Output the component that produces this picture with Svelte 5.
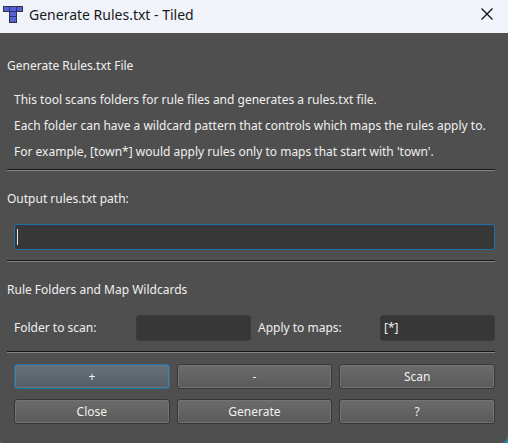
<script>
  let outputPath = $state('');
  let folder = $state('');
  let wildcard = $state('[*]');

  const actions = ['+', '-', 'Scan', 'Close', 'Generate', '?'];
</script>

<div class="desktop">
  <div class="dialog" role="dialog" aria-labelledby="title">
    <header>
      <svg class="logo" viewBox="0 0 20 17" aria-hidden="true">
        <path d="M0 0H20V6H14V17H6V6H0Z" fill="#30343c" />
        <g fill="#5760d4">
          <rect x="1" y="1" width="5" height="4" />
          <rect x="7" y="1" width="6" height="4" />
          <rect x="14" y="1" width="5" height="4" />
          <rect x="7" y="6" width="6" height="4" />
          <rect x="7" y="11" width="6" height="5" />
        </g>
        <path d="M6.500 1V5M13.500 1V5M7 5.500H13M7 10.500H13" stroke="#292f78" />
      </svg>
      <h1 id="title">Generate Rules.txt - Tiled</h1>
      <button class="close" aria-label="Close window">
        <svg viewBox="0 0 12 12" aria-hidden="true">
          <path d="M.5 .5L11.500 11.500M11.500 .5L.5 11.500" stroke="#111" stroke-width="1.300" fill="none" />
        </svg>
      </button>
    </header>

    <main>
      <section>
        <h2>Generate Rules.txt File</h2>
        <div class="notes">
          <p>This tool scans folders for rule files and generates a rules.txt file.</p>
          <p>Each folder can have a wildcard pattern that controls which maps the rules apply to.</p>
          <p>For example, [town*] would apply rules only to maps that start with 'town'.</p>
        </div>
      </section>
      <hr />

      <section>
        <h2><label for="output">Output rules.txt path:</label></h2>
        <div class="inset path">
          <input id="output" class="active" type="text" bind:value={outputPath} />
          <span class="caret"></span>
        </div>
      </section>
      <hr />

      <section>
        <h2>Rule Folders and Map Wildcards</h2>
        <div class="inset fields">
          <label for="folder">Folder to scan:</label>
          <input id="folder" type="text" bind:value={folder} />
          <label for="maps">Apply to maps:</label>
          <input id="maps" type="text" bind:value={wildcard} />
        </div>
      </section>
      <hr />

      <div class="actions">
        {#each actions as action, i}
          <button class:default={i === 0}>{action}</button>
        {/each}
      </div>
    </main>
  </div>
</div>

<style>
  :global(body) {
    margin: 0;
  }

  .desktop {
    min-height: 100vh;
    display: flex;
    background: #2b83a8;
  }

  .dialog {
    flex: 1;
    min-width: 0;
    background: #4f4f4f;
    color: #f0f0f0;
    border-radius: 0 0 8px 3px;
    overflow: hidden;
    font: 12px/26px "Noto Sans", sans-serif;
  }

  header {
    display: flex;
    align-items: center;
    height: 33px;
    padding: 0 15px 5px 3px;
    box-sizing: border-box;
    background: #f0f3f9;
    color: #191919;
  }

  .logo {
    width: 20px;
    height: 17px;
    margin-right: 6px;
  }

  h1 {
    flex: 1;
    margin: 0;
    padding-top: 2px;
    font-size: 14px;
    line-height: 26px;
    font-weight: 400;
  }

  .close {
    display: flex;
    padding: 0;
    border: 0;
    background: none;
  }

  .close svg {
    width: 12px;
    height: 12px;
  }

  main {
    padding: 20px 13px 19px 7px;
  }

  h2 {
    margin: 0;
    font-size: 12px;
    line-height: 26px;
    font-weight: 400;
  }

  .notes,
  .inset,
  .actions {
    margin-left: 7px;
  }

  .notes {
    padding-top: 8px;
    white-space: nowrap;
  }

  p {
    margin: 0;
  }

  hr {
    height: 1px;
    margin: 4px 0 11px;
    border: 0;
    background: #171717;
    border-bottom: 1px solid #858585;
  }

  hr + section {
    padding-top: 4px;
  }

  .inset {
    padding: 12px 0 6px;
  }

  .path {
    position: relative;
    display: flex;
  }

  input {
    width: 100%;
    min-width: 0;
    height: 26px;
    box-sizing: border-box;
    padding: 0 3px;
    border: 1px solid #3c3c3c;
    border-radius: 3px;
    outline: none;
    background: #373737;
    color: #f0f0f0;
    font: inherit;
  }

  input.active {
    border-color: #1d71a6;
  }

  .caret {
    position: absolute;
    top: 17px;
    left: 3px;
    width: 1px;
    height: 16px;
    background: #e4e4e4;
  }

  .fields {
    display: grid;
    grid-template-columns: repeat(4, 1fr);
    gap: 7px;
  }

  .actions {
    display: grid;
    grid-template-columns: repeat(3, 1fr);
    gap: 10px 7px;
  }

  .actions button {
    height: 25px;
    padding: 0;
    border: 1px solid #363636;
    border-radius: 3px;
    background: linear-gradient(#6b6b6b, #5a5a5a);
    box-shadow: inset 0 0 0 1px #747474;
    color: #f0f0f0;
    font: inherit;
    line-height: 23px;
  }

  .actions .default {
    border-color: #1d71a6;
    background: linear-gradient(#687379, #555d66);
    box-shadow: inset 0 0 0 1px #68777f;
  }
</style>
